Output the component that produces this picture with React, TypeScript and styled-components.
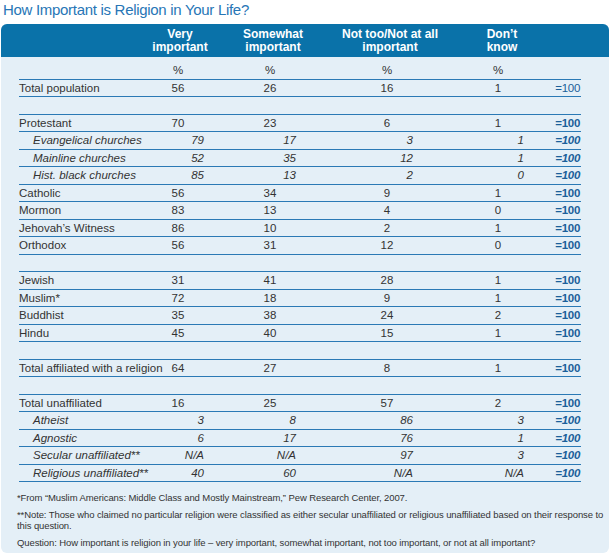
import React from 'react';
import styled, {createGlobalStyle} from "styled-components";

type DataRow = {
    label: string;
    vals: string[];
    sub?: boolean;
    plainEq?: boolean;
};

type Entry = DataRow | "spacer";

const rows: Entry[] = [
    {label: "Total population", vals: ["56", "26", "16", "1"], plainEq: true},
    "spacer",
    {label: "Protestant", vals: ["70", "23", "6", "1"]},
    {label: "Evangelical churches", vals: ["79", "17", "3", "1"], sub: true},
    {label: "Mainline churches", vals: ["52", "35", "12", "1"], sub: true},
    {label: "Hist. black churches", vals: ["85", "13", "2", "0"], sub: true},
    {label: "Catholic", vals: ["56", "34", "9", "1"]},
    {label: "Mormon", vals: ["83", "13", "4", "0"]},
    {label: "Jehovah’s Witness", vals: ["86", "10", "2", "1"]},
    {label: "Orthodox", vals: ["56", "31", "12", "0"]},
    "spacer",
    {label: "Jewish", vals: ["31", "41", "28", "1"]},
    {label: "Muslim*", vals: ["72", "18", "9", "1"]},
    {label: "Buddhist", vals: ["35", "38", "24", "2"]},
    {label: "Hindu", vals: ["45", "40", "15", "1"]},
    "spacer",
    {label: "Total affiliated with a religion", vals: ["64", "27", "8", "1"]},
    "spacer",
    {label: "Total unaffiliated", vals: ["16", "25", "57", "2"]},
    {label: "Atheist", vals: ["3", "8", "86", "3"], sub: true},
    {label: "Agnostic", vals: ["6", "17", "76", "1"], sub: true},
    {label: "Secular unaffiliated**", vals: ["N/A", "N/A", "97", "3"], sub: true},
    {label: "Religious unaffiliated**", vals: ["40", "60", "N/A", "N/A"], sub: true},
];

const headers = [
    {lines: ["Very", "important"], shift: 4},
    {lines: ["Somewhat", "important"], shift: 6},
    {lines: ["Not too/Not at all", "important"], shift: 6},
    {lines: ["Don’t", "know"], shift: 8},
];

export default function App() {
    return (
        <>
            <GlobalStyle/>
            <Title>How Important is Religion in Your Life?</Title>
            <Panel>
                <HeaderBand>
                    <Grid>
                        <span/>
                        {headers.map((h, i) => (
                            <HeadCell key={i} $shift={h.shift}>
                                {h.lines.map((l) => <div key={l}>{l}</div>)}
                            </HeadCell>
                        ))}
                        <span/>
                    </Grid>
                </HeaderBand>

                <Body>
                    <PercentRow>
                        <span/>
                        <Cell>%</Cell>
                        <Cell>%</Cell>
                        <Cell>%</Cell>
                        <Cell>%</Cell>
                        <span/>
                    </PercentRow>

                    {rows.map((r, i) =>
                        r === "spacer" ? (
                            <Row key={i}/>
                        ) : (
                            <Row key={i}>
                                <Label $sub={r.sub}>{r.label}</Label>
                                {r.vals.map((v, j) => (
                                    <Cell key={j}>
                                        <Num $sub={r.sub}>{v}</Num>
                                    </Cell>
                                ))}
                                <Equals $plain={r.plainEq} $sub={r.sub}>=100</Equals>
                            </Row>
                        )
                    )}

                    <Notes>
                        <Note>*From “Muslim Americans: Middle Class and Mostly Mainstream,” Pew Research Center, 2007.</Note>
                        <Note>
                            **Note: Those who claimed no particular religion were classified as either secular
                            unaffiliated or religious unaffiliated based on their response to this question.
                        </Note>
                        <Note>
                            Question: How important is religion in your life – very important, somewhat important,
                            not too important, or not at all important?
                        </Note>
                    </Notes>
                </Body>
            </Panel>
        </>
    );
}

const GlobalStyle = createGlobalStyle`
  body {
    margin: 0;
    background: #ffffff;
    font-family: "Liberation Sans", Arial, sans-serif;
    color: #333333;
  }
`

const Title = styled.h1`
  margin: 0 0 4px 3px;
  height: 20px;
  font-size: 15px;
  line-height: 20px;
  font-weight: normal;
  letter-spacing: -0.3px;
  color: #2776b6;
`

const Panel = styled.section`
  margin: 0 1px;
  width: 608px;
  height: 529px;
  background: #e4eff7;
  border-radius: 6px;
  overflow: hidden;
`

const HeaderBand = styled.div`
  background: #0a72a9;
  height: 33px;
  padding: 4px 0 0 18px;
  box-sizing: border-box;
  color: #ffffff;
`

const Grid = styled.div`
  display: grid;
  grid-template-columns: 121px 76px 108px 126px 96px 35px;
  width: 562px;
`

const HeadCell = styled.div<{ $shift: number }>`
  text-align: center;
  padding-left: ${p => p.$shift}px;
  font-size: 12px;
  font-weight: bold;
  line-height: 13px;
  white-space: nowrap;
`

const Body = styled.div`
  padding: 0 28px 0 18px;
`

const Row = styled(Grid)`
  height: 16.5px;
  align-items: center;
  border-bottom: 1px solid #2a79b5;
  font-size: 11.5px;
  line-height: 16.5px;
  white-space: nowrap;
`

const PercentRow = styled(Row)`
  padding-top: 5px;
`

const Label = styled.span<{ $sub?: boolean }>`
  padding-left: ${p => (p.$sub ? 14 : 0)}px;
  font-style: ${p => (p.$sub ? "italic" : "normal")};
  overflow: visible;
`

const Cell = styled.span`
  display: flex;
  justify-content: center;
`

const Num = styled.span<{ $sub?: boolean }>`
  display: inline-block;
  width: ${p => (p.$sub ? "52px" : "auto")};
  text-align: right;
  font-style: ${p => (p.$sub ? "italic" : "normal")};
`

const Equals = styled.span<{ $plain?: boolean; $sub?: boolean }>`
  text-align: right;
  padding-right: 1px;
  color: #1b5f9a;
  font-weight: ${p => (p.$plain ? "normal" : "bold")};
  font-style: ${p => (p.$sub ? "italic" : "normal")};
  letter-spacing: -0.3px;
`

const Notes = styled.div`
  padding: 10px 0 0 0;
  margin-left: -2px;
  width: 590px;
`

const Note = styled.p`
  margin: 0 0 6px;
  font-size: 9.5px;
  line-height: 11px;
  letter-spacing: -0.1px;
  color: #333333;
`
